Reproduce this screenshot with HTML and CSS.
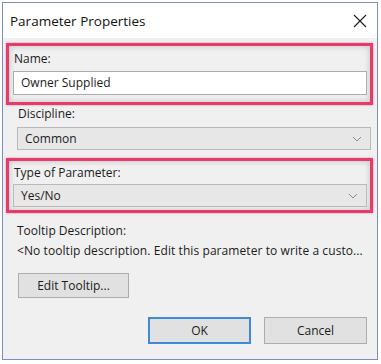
FILE: index.html
```html
<!DOCTYPE html>
<html>
<head>
  <title>Parameter Properties</title>
  <link rel="stylesheet" href="styles.css">
</head>
<body>
  <div class="dialog">
    <div class="titlebar">
      <span class="title">Parameter Properties</span>
      <svg class="close" width="14" height="14" viewBox="0 0 14 14">
        <path d="M1 1 L13 13 M13 1 L1 13" stroke="#1e1e1e" stroke-width="1.1" fill="none"/>
      </svg>
    </div>

    <div class="content">
      <div class="highlight first">
        <div class="label">Name:</div>
        <div class="text-input">Owner Supplied</div>
      </div>

      <div class="plain">
        <div class="label small">Discipline:</div>
        <div class="select">
          <span>Common</span>
          <svg width="10" height="6" viewBox="0 0 10 6"><path d="M1 1 L5 5 L9 1" stroke="#8a8a8a" stroke-width="1" fill="none"/></svg>
        </div>
      </div>

      <div class="highlight second">
        <div class="label">Type of Parameter:</div>
        <div class="select">
          <span>Yes/No</span>
          <svg width="10" height="6" viewBox="0 0 10 6"><path d="M1 1 L5 5 L9 1" stroke="#8a8a8a" stroke-width="1" fill="none"/></svg>
        </div>
      </div>

      <div class="tooltip">
        <div class="line">Tooltip Description:</div>
        <div class="line wide">&lt;No tooltip description. Edit this parameter to write a custo...</div>
        <button class="btn edit">Edit Tooltip...</button>
      </div>

      <div class="actions">
        <button class="btn main default">OK</button>
        <button class="btn main">Cancel</button>
      </div>
    </div>
  </div>
</body>
</html>
```

FILE: styles.css
```css
body {
  margin: 0;
  background-color: #fff;
  font-family: "Open Sans", "Noto Sans", sans-serif;
  font-size: 12px;
  color: #1b1b1b;
}

.dialog {
  margin: 2px;
  width: 374px;
  height: 356px;
  border: 1px solid #7b8bc6;
  background-color: #f0f0f0;
}

.titlebar {
  height: 35px;
  background-color: #fff;
  display: flex;
  align-items: center;
  justify-content: space-between;
  padding: 0 10px 0 7px;
}

.title {
  font-size: 13.5px;
  color: #111;
}

.content {
  padding: 5px 4px 0 3px;
}

.highlight {
  border: 3px solid #ea3a6b;
  box-shadow: inset 0 0 6px rgba(0, 0, 0, 0.2), 0 0 2px rgba(234, 58, 107, 0.5);
  padding: 0 3px 7px 4px;
}

.highlight.second {
  padding-bottom: 3px;
}

.label {
  height: 25px;
  line-height: 25px;
  padding-left: 1px;
}

.second .label {
  height: 23px;
  line-height: 23px;
}

.text-input {
  box-sizing: border-box;
  height: 24px;
  line-height: 22px;
  border: 1px solid #acacac;
  background-color: #fff;
  padding-left: 7px;
}

.plain {
  padding: 0 2px 8px 11px;
}

.label.small {
  height: 22px;
  line-height: 18px;
}

.select {
  box-sizing: border-box;
  height: 23px;
  border: 1px solid #b9b9b9;
  background-color: #e7e7e7;
  display: flex;
  align-items: center;
  justify-content: space-between;
  padding: 0 8px 0 7px;
}

.tooltip {
  padding: 8px 0 0 11px;
}

.line {
  height: 20px;
  line-height: 20px;
}

.wide {
  letter-spacing: 0.08px;
}

.btn {
  box-sizing: border-box;
  font-family: "Open Sans", "Noto Sans", sans-serif;
  font-size: 12px;
  color: #1b1b1b;
  background-color: #e1e1e1;
  border: 1px solid #adadad;
  padding: 0;
}

.edit {
  margin: 12px 0 0 1px;
  width: 111px;
  height: 25px;
}

.actions {
  display: flex;
  justify-content: flex-end;
  gap: 13px;
  padding: 19px 6px 0 0;
}

.main {
  width: 103px;
  height: 27px;
}

.default {
  border: 2px solid #3d8ad9;
}
```
